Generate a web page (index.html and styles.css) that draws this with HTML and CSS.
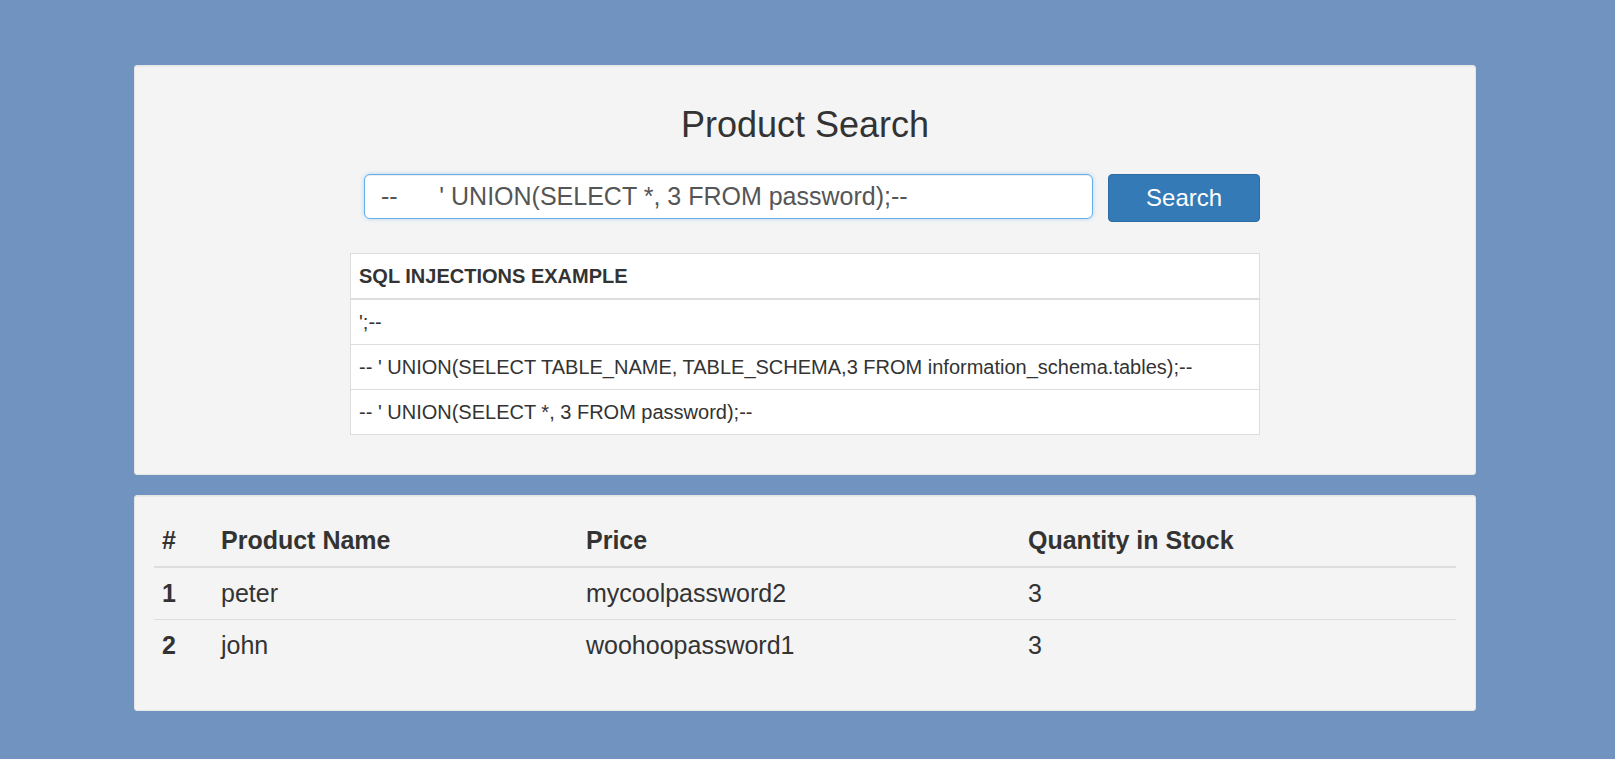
FILE: index.html
```html
<!DOCTYPE html>
<html lang="en">
<head>
<meta charset="utf-8">
<title>Product Search</title>
<link rel="stylesheet" href="styles.css">
</head>
<body>
<div class="page">
  <div class="well search-well">
    <h1 class="title">Product Search</h1>
    <form class="search-form">
      <input class="search-input" type="text" value="--      ' UNION(SELECT *, 3 FROM password);--">
      <button class="search-btn" type="button">Search</button>
    </form>
    <table class="examples">
      <thead>
        <tr><th>SQL INJECTIONS EXAMPLE</th></tr>
      </thead>
      <tbody>
        <tr><td>';--</td></tr>
        <tr><td>-- ' UNION(SELECT TABLE_NAME, TABLE_SCHEMA,3 FROM information_schema.tables);--</td></tr>
        <tr><td>-- ' UNION(SELECT *, 3 FROM password);--</td></tr>
      </tbody>
    </table>
  </div>
  <div class="well results-well">
    <table class="results">
      <thead>
        <tr>
          <th class="col-num">#</th>
          <th class="col-name">Product Name</th>
          <th class="col-price">Price</th>
          <th class="col-qty">Quantity in Stock</th>
        </tr>
      </thead>
      <tbody>
        <tr><th class="col-num">1</th><td>peter</td><td>mycoolpassword2</td><td>3</td></tr>
        <tr><th class="col-num">2</th><td>john</td><td>woohoopassword1</td><td>3</td></tr>
      </tbody>
    </table>
  </div>
</div>
</body>
</html>
```

FILE: styles.css
```css
html, body {
  margin: 0;
  padding: 0;
}
body {
  background: #7093bf;
  font-family: "Liberation Sans", Arial, Helvetica, sans-serif;
  color: #333;
  min-height: 759px;
}
.page {
  padding: 65px 0 0 134px;
}
.well {
  box-sizing: border-box;
  width: 1342px;
  background: #f4f4f4;
  border: 1px solid #e6e6e6;
  border-radius: 3px;
  box-shadow: inset 0 1px 1px rgba(0,0,0,0.04);
  padding: 19px;
  margin-bottom: 20px;
}
.title {
  margin: 20px 0 0;
  font-size: 36px;
  font-weight: normal;
  line-height: 40px;
  text-align: center;
  color: #333;
}
.search-form {
  width: 910px;
  margin: 29px auto 0;
  padding-left: 14px;
  box-sizing: border-box;
  display: flex;
  align-items: flex-start;
  gap: 15px;
  height: 48px;
}
.search-input {
  box-sizing: border-box;
  width: 730px;
  height: 45px;
  padding: 0 16px;
  font-family: "Liberation Sans", Arial, Helvetica, sans-serif;
  font-size: 25px;
  color: #555;
  background: #fff;
  border: 1px solid #66afe9;
  border-radius: 6px;
  outline: none;
  box-shadow: inset 0 1px 1px rgba(0,0,0,0.075), 0 0 4px rgba(102,175,233,0.45);
}
.search-btn {
  box-sizing: border-box;
  width: 152px;
  height: 48px;
  padding: 0;
  font-family: "Liberation Sans", Arial, Helvetica, sans-serif;
  font-size: 24px;
  color: #fff;
  background: #337ab7;
  border: 1px solid #2e6da4;
  border-radius: 4px;
}
.examples {
  width: 910px;
  margin: 31px auto 20px;
  border-collapse: collapse;
  background: #fff;
  border: 1px solid #ddd;
  font-size: 20px;
  line-height: 28px;
}
.examples th,
.examples td {
  text-align: left;
  padding: 8px;
  border: 1px solid #ddd;
}
.examples th {
  font-weight: bold;
  border-bottom: 2px solid #ddd;
}
.results {
  width: 100%;
  border-collapse: collapse;
  margin-bottom: 20px;
  font-size: 25px;
  line-height: 35px;
}
.results th,
.results td {
  text-align: left;
  padding: 8px;
  border-top: 1px solid #ddd;
}
.results thead th {
  border-top: 0;
  border-bottom: 2px solid #ddd;
  font-weight: bold;
}
.results tbody th {
  font-weight: bold;
}
.results tbody tr:first-child th,
.results tbody tr:first-child td {
  border-top: 0;
}
.col-num { width: 43px; }
.col-name { width: 349px; }
.col-price { width: 426px; }
.col-qty { width: auto; }
```
